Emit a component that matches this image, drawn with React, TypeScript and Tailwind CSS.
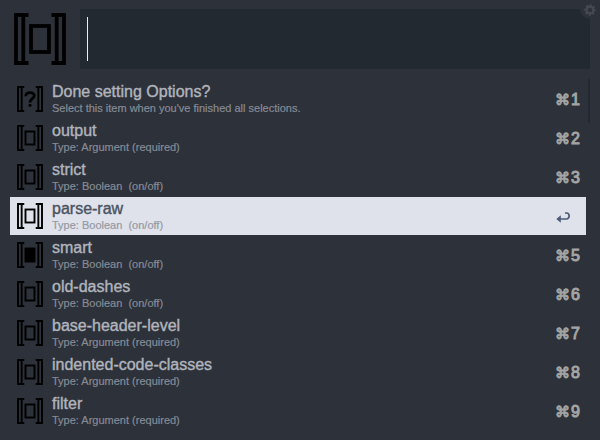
type Mark = 'empty' | 'filled' | 'question';

interface Item {
  title: string;
  subtitle: string;
  mark?: Mark;
  selected?: boolean;
}

const argument = 'Type: Argument (required)';
const boolean = 'Type: Boolean  (on/off)';

const items: Item[] = [
  { title: 'Done setting Options?', subtitle: "Select this item when you've finished all selections.", mark: 'question' },
  { title: 'output', subtitle: argument },
  { title: 'strict', subtitle: boolean },
  { title: 'parse-raw', subtitle: boolean, selected: true },
  { title: 'smart', subtitle: boolean, mark: 'filled' },
  { title: 'old-dashes', subtitle: boolean },
  { title: 'base-header-level', subtitle: argument },
  { title: 'indented-code-classes', subtitle: argument },
  { title: 'filter', subtitle: argument },
];

function BracketIcon({ mark = 'empty', className }: { mark?: Mark; className: string }) {
  return (
    <svg viewBox="0 0 52 52" className={className} fill="none" stroke="#000" strokeWidth="3.800">
      <path d="M14.500 2H2V50H14.500M9.300 2V50M37.500 2H50V50H37.500M42.700 2V50" />
      {mark === 'question' ? (
        <>
          <path d="M17.500 20.500C17.500 11 34.500 11 34.500 19.500C34.500 25.500 26 25.500 26 33" strokeWidth="5.500" />
          <path d="M26 36V41.500" strokeWidth="5.500" />
        </>
      ) : (
        <rect x="17" y="13" width="18" height="26" fill={mark === 'filled' ? '#000' : 'none'} />
      )}
    </svg>
  );
}

function Gear() {
  return (
    <svg viewBox="-6 -6 12 12" className="h-3 w-3" fill="none" stroke="#454954">
      <circle r="3.500" strokeWidth="2.400" />
      <circle r="5" strokeWidth="1.600" strokeDasharray="2 1.927" strokeDashoffset="1" />
    </svg>
  );
}

function ReturnArrow() {
  return (
    <svg viewBox="0 0 14 11" className="ml-px h-[11px] w-3.5" fill="none" stroke="#4c5b79" strokeWidth="1.700">
      <path d="M9 1H10.500C14 1 14 7 10.500 7H3" />
      <path d="M4.800 3.300L0.300 7L4.800 10.700Z" fill="#4c5b79" stroke="none" />
    </svg>
  );
}

function Row({ item, index }: { item: Item; index: number }) {
  const titleColor = item.selected ? 'text-[#4b5362]' : 'text-[#b0b4bd]';
  const subColor = item.selected ? 'text-[#9599a4]' : 'text-[#858b96]';
  return (
    <li className={`flex h-[39px] items-start pt-px ${item.selected ? 'bg-[#dfe2ea] bg-clip-content' : ''}`}>
      <div className="flex h-[38px] w-full items-center pl-[7px]">
        <BracketIcon mark={item.mark} className="h-[26px] w-[26px] shrink-0" />
        <div className="ml-[9px] flex-1 whitespace-pre">
          <div className={`text-[16px] leading-[18px] [-webkit-text-stroke:0.4px_currentColor] ${titleColor}`}>{item.title}</div>
          <div className={`text-[11px] leading-[15px] [-webkit-text-stroke:0.2px_currentColor] ${subColor}`}>{item.subtitle}</div>
        </div>
        <div className="flex w-[31px] items-center pt-0.5 text-[#a3a4a4]">
          {item.selected ? (
            <ReturnArrow />
          ) : (
            <>
              <span className="w-[16px] font-['DejaVu_Sans',sans-serif] text-[15px] leading-5 [-webkit-text-stroke:0.9px_currentColor]">⌘</span>
              <span className="text-[16px] leading-5 [-webkit-text-stroke:1px_currentColor]">{index + 1}</span>
            </>
          )}
        </div>
      </div>
    </li>
  );
}

export default function App() {
  return (
    <main className="relative h-[440px] w-[600px] overflow-hidden bg-[#2d3139] font-['Liberation_Sans',Arial,sans-serif]">
      <header className="flex h-[79px] pt-[9px] pl-3.5">
        <BracketIcon className="mt-1 h-[52px] w-[52px]" />
        <div className="ml-3.5 h-[60px] w-[510px] bg-[#232930] pt-2 pl-[7px]">
          <div className="h-11 w-px bg-[#eceef2]" />
        </div>
      </header>
      <div className="absolute top-0 right-0 flex h-[19px] w-5 items-center justify-center rounded-bl-[10px] bg-[#2d3139] pr-px">
        <Gear />
      </div>
      <div className="flex pl-2.5">
        <ul className="w-[576px]">
          {items.map((item, i) => (
            <Row key={item.title} item={item} index={i} />
          ))}
        </ul>
        <div className="ml-0.5 h-11 w-0.5 bg-[#232930]" />
      </div>
    </main>
  );
}
